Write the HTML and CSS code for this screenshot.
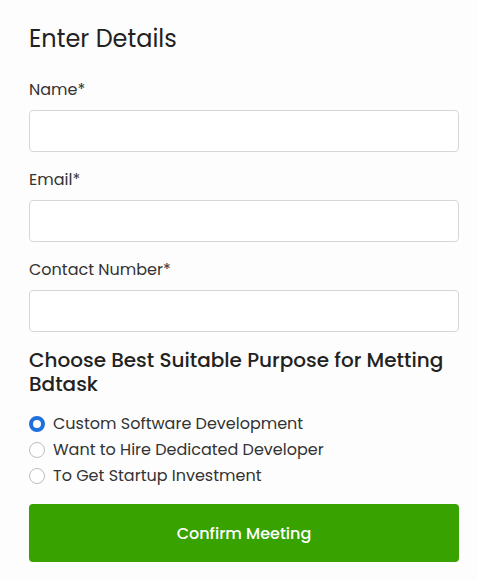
FILE: index.html
```html
<!DOCTYPE html>
<html lang="en">
<head>
<meta charset="utf-8">
<title>Enter Details</title>
<link rel="stylesheet" href="styles.css">
</head>
<body>
<form class="form">
  <h1 class="title">Enter Details</h1>
  <div class="field">
    <label class="label">Name*</label>
    <input class="input" type="text">
  </div>
  <div class="field">
    <label class="label">Email*</label>
    <input class="input" type="email">
  </div>
  <div class="field">
    <label class="label">Contact Number*</label>
    <input class="input" type="tel">
  </div>
  <h2 class="subtitle">Choose Best Suitable Purpose for Metting Bdtask</h2>
  <div class="options">
    <label class="option"><span class="radio checked"></span>Custom Software Development</label>
    <label class="option"><span class="radio"></span>Want to Hire Dedicated Developer</label>
    <label class="option"><span class="radio"></span>To Get Startup Investment</label>
  </div>
  <button class="button" type="button">Confirm Meeting</button>
</form>
</body>
</html>
```
FILE: styles.css
```css
html, body {
  margin: 0;
  padding: 0;
  background: #fdfdfd;
}
body {
  font-family: "Poppins", "Inter", "Open Sans", sans-serif;
  color: #2b2b2b;
}
.form {
  display: flex;
  flex-direction: column;
  padding: 23px 18px 0 29px;
}
.title {
  margin: 0 0 23px;
  font-size: 24px;
  line-height: 32px;
  font-weight: 400;
  color: #222;
}
.field {
  display: flex;
  flex-direction: column;
}
.label {
  font-size: 16px;
  line-height: 24px;
  color: #333;
  margin-bottom: 8px;
}
.input {
  box-sizing: border-box;
  height: 42px;
  width: 100%;
  border: 1px solid #d6d6d6;
  border-radius: 4px;
  background: #fff;
  margin: 0 0 16px;
}
.subtitle {
  margin: 0;
  font-size: 20px;
  line-height: 24px;
  font-weight: 500;
  color: #222;
}
.options {
  display: flex;
  flex-direction: column;
  margin-top: 15px;
}
.option {
  display: flex;
  align-items: center;
  gap: 8px;
  font-size: 16px;
  line-height: 26px;
  color: #333;
}
.radio {
  box-sizing: border-box;
  flex: none;
  width: 16px;
  height: 16px;
  border-radius: 50%;
  border: 1px solid #bdbdbd;
  background: #fff;
}
.radio.checked {
  border: 4.5px solid #1f6fdd;
}
.button {
  margin-top: 15px;
  height: 58px;
  width: 100%;
  border: none;
  border-radius: 4px;
  background: #38a200;
  color: #fff;
  font-family: inherit;
  font-size: 16px;
  font-weight: 500;
}
```
